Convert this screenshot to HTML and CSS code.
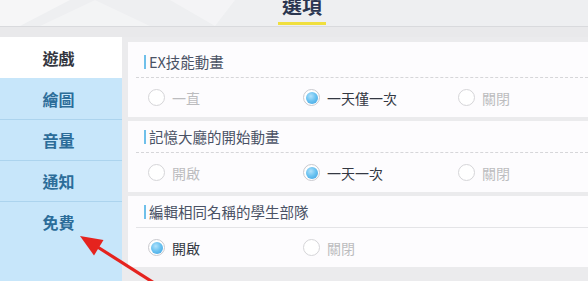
FILE: index.html
```html
<!DOCTYPE html>
<html lang="zh-Hant">
<head>
<meta charset="utf-8">
<title>選項</title>
<link rel="stylesheet" href="styles.css">
</head>
<body>
<header class="topbar">
  <svg class="deco" width="260" height="26" viewBox="0 0 260 26">
    <polygon points="0,0 70,0 20,26 0,26" fill="#ffffff" opacity="0.45"/>
    <polygon points="40,26 95,0 150,26" fill="#ffffff" opacity="0.3"/>
    <polygon points="170,0 235,0 215,26" fill="#ffffff" opacity="0.35"/>
  </svg>
  <div class="title-wrap">
    <h1 class="title">選項</h1>
    <div class="title-bar"></div>
  </div>
</header>
<div class="band"></div>
<div class="main">
  <nav class="sidebar">
    <div class="nav-item active">遊戲</div>
    <div class="nav-item first-blue">繪圖</div>
    <div class="nav-item">音量</div>
    <div class="nav-item">通知</div>
    <div class="nav-item">免費</div>
  </nav>
  <section class="panel">
    <div class="group group-first">
      <div class="group-head dashed"><span class="mark"></span>EX技能動畫</div>
      <div class="options">
        <label class="opt"><span class="radio"></span><span class="opt-text">一直</span></label>
        <label class="opt on"><span class="radio"></span><span class="opt-text">一天僅一次</span></label>
        <label class="opt"><span class="radio"></span><span class="opt-text">關閉</span></label>
      </div>
    </div>
    <div class="group">
      <div class="group-head dashed"><span class="mark"></span>記憶大廳的開始動畫</div>
      <div class="options">
        <label class="opt"><span class="radio"></span><span class="opt-text">開啟</span></label>
        <label class="opt on"><span class="radio"></span><span class="opt-text">一天一次</span></label>
        <label class="opt"><span class="radio"></span><span class="opt-text">關閉</span></label>
      </div>
    </div>
    <div class="group">
      <div class="group-head solid"><span class="mark"></span>編輯相同名稱的學生部隊</div>
      <div class="options">
        <label class="opt on"><span class="radio"></span><span class="opt-text">開啟</span></label>
        <label class="opt"><span class="radio"></span><span class="opt-text">關閉</span></label>
      </div>
    </div>
  </section>
</div>
<svg class="arrow" width="588" height="281" viewBox="0 0 588 281">
  <line x1="162" y1="288" x2="96" y2="246" stroke="#e5231e" stroke-width="3.2"/>
  <polygon points="80,236 103.5,240 94,255.5" fill="#e5231e"/>
</svg>
</body>
</html>
```

FILE: styles.css
```css
* { box-sizing: border-box; }
html, body {
  margin: 0;
  padding: 0;
}
body {
  width: 588px;
  height: 281px;
  overflow: hidden;
  background: #ebebed;
  font-family: "Noto Sans CJK TC", "Noto Sans", sans-serif;
  position: relative;
}
.topbar {
  position: relative;
  height: 27px;
  background: #eeeff1;
  border-bottom: 1px solid #d9dadd;
  display: flex;
  justify-content: center;
}
.deco {
  position: absolute;
  left: 0;
  top: 0;
}
.title-wrap {
  position: relative;
  display: flex;
  flex-direction: column;
  align-items: center;
  width: 48px;
  margin-left: 16px;
}
.title {
  margin: -8px 0 0 0;
  font-size: 20px;
  line-height: 28px;
  font-weight: 700;
  color: #2b3650;
  letter-spacing: 0;
}
.title-bar {
  width: 48px;
  height: 3px;
  background: #f0df3e;
  margin-top: 2px;
}
.band {
  height: 10px;
  background: #e9e9eb;
}
.main {
  display: flex;
  gap: 6px;
  height: 244px;
}
.sidebar {
  width: 122px;
  flex-shrink: 0;
  background: #c7e6fa;
  display: flex;
  flex-direction: column;
}
.nav-item {
  height: 41px;
  display: flex;
  align-items: center;
  justify-content: center;
  padding-right: 5px;
  font-size: 16px;
  font-weight: 700;
  color: #2c6d99;
  border-top: 1px solid #acd4ee;
}
.nav-item.active {
  background: #ffffff;
  color: #333640;
  border-top: none;
}
.nav-item.first-blue {
  border-top: none;
}
.panel {
  flex: 1;
  min-width: 0;
  margin-top: 5px;
  display: flex;
  flex-direction: column;
  gap: 4px;
}
.group {
  background: #fdfcfe;
}
.group-first {
  padding-top: 4px;
}
.group-head {
  height: 32px;
  display: flex;
  align-items: center;
  margin-left: 8px;
  padding-left: 8px;
  font-size: 14.5px;
  color: #4a5265;
}
.group-head.dashed {
  border-bottom: 1px dashed #d6d6d9;
}
.group-head.solid {
  border-bottom: 1px solid #e4e4e7;
}
.mark {
  width: 2px;
  height: 14px;
  background: #6fc0ea;
  margin-right: 3px;
}
.options {
  height: 39px;
  display: flex;
  align-items: center;
  padding-left: 20px;
}
.opt {
  width: 155px;
  flex-shrink: 0;
  display: flex;
  align-items: center;
  gap: 7px;
}
.radio {
  width: 17px;
  height: 17px;
  flex-shrink: 0;
  border-radius: 50%;
  border: 1.5px solid #d5d5d8;
  background: #ffffff;
  display: flex;
  align-items: center;
  justify-content: center;
}
.opt-text {
  font-size: 14px;
  color: #bcbcbf;
}
.opt.on .radio {
  border: 1px solid #c9c9ce;
}
.opt.on .radio::after {
  content: "";
  width: 12px;
  height: 12px;
  border-radius: 50%;
  background: radial-gradient(circle at 40% 35%, #b2e2fb 0%, #6cc3f1 45%, #3b9fe0 100%);
}
.opt.on .opt-text {
  color: #343843;
}
.arrow {
  position: absolute;
  left: 0;
  top: 0;
  pointer-events: none;
}
```
